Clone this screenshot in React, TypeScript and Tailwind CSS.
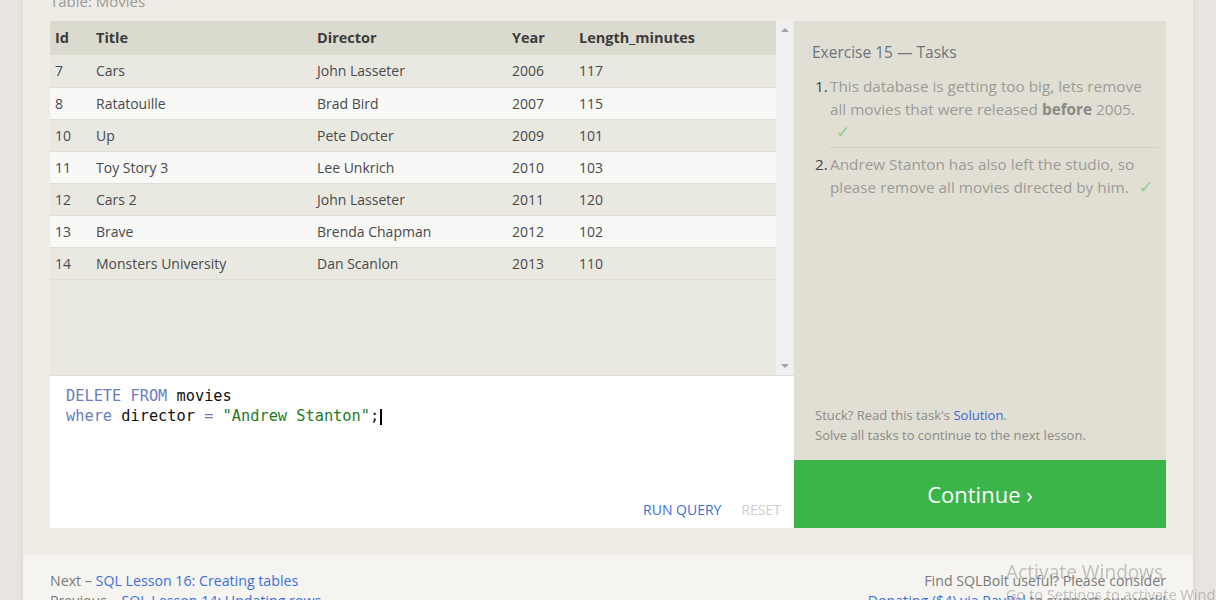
const movies = [
  { id: 7, title: 'Cars', director: 'John Lasseter', year: 2006, length: 117 },
  { id: 8, title: 'Ratatouille', director: 'Brad Bird', year: 2007, length: 115 },
  { id: 10, title: 'Up', director: 'Pete Docter', year: 2009, length: 101 },
  { id: 11, title: 'Toy Story 3', director: 'Lee Unkrich', year: 2010, length: 103 },
  { id: 12, title: 'Cars 2', director: 'John Lasseter', year: 2011, length: 120 },
  { id: 13, title: 'Brave', director: 'Brenda Chapman', year: 2012, length: 102 },
  { id: 14, title: 'Monsters University', director: 'Dan Scanlon', year: 2013, length: 110 },
];

const sans = "font-['Open_Sans','Noto_Sans',sans-serif]";

function Check() {
  return (
    <span className="ml-[6px] inline-block w-[18px] font-['DejaVu_Sans',sans-serif] text-[17px] leading-[23px] text-[#8ad08a]">
      ✓
    </span>
  );
}

export default function App() {
  return (
    <div className={`min-h-screen overflow-hidden bg-[#e8e5e1] ${sans}`}>
      <div className="mx-auto w-[1170px] bg-[#efece5] shadow-[0_0_6px_rgba(0,0,0,0.08)]">
        <div className="px-[27px] pb-[27px]">
          <p className="-mt-[9px] text-[15px] leading-[20px] text-[#9a9a9a]">Table: Movies</p>

          <div className="mt-[10px] flex">
            {/* left: results + editor */}
            <div className="flex w-[744px] flex-col">
              <div className="flex h-[354px] bg-[#e9e8e1]">
                <div className="flex-1">
                  <table className="w-full border-collapse text-left text-[14px] text-[#4a4a4a]">
                    <thead>
                      <tr className="h-[34px] bg-[#dbdacf] text-[14.5px] text-[#3c3c3c]">
                        <th className="w-[40px] pl-[5px] font-bold">Id</th>
                        <th className="w-[221px] pl-[6px] font-bold">Title</th>
                        <th className="w-[195px] pl-[6px] font-bold">Director</th>
                        <th className="w-[67px] pl-[6px] font-bold">Year</th>
                        <th className="pl-[6px] font-bold">Length_minutes</th>
                      </tr>
                    </thead>
                    <tbody>
                      {movies.map((m, i) => (
                        <tr
                          key={m.id}
                          className={`h-[32px] border-b border-[#dfddd6] ${i % 2 === 1 ? 'bg-[#f8f8f7]' : 'bg-[#e9e8e1]'}`}
                        >
                          <td className="pl-[5px]">{m.id}</td>
                          <td className="pl-[6px]">{m.title}</td>
                          <td className="pl-[6px]">{m.director}</td>
                          <td className="pl-[6px]">{m.year}</td>
                          <td className="pl-[6px]">{m.length}</td>
                        </tr>
                      ))}
                    </tbody>
                  </table>
                </div>
                <div className="flex w-[17px] flex-col items-center justify-between bg-[#f0f0f0] py-[7px]">
                  <div className="h-0 w-0 border-x-[4px] border-b-[4px] border-x-transparent border-b-[#a3a3a3]" />
                  <div className="h-0 w-0 border-x-[4px] border-t-[4px] border-x-transparent border-t-[#a3a3a3]" />
                </div>
                <div className="w-px bg-[#efece5]" />
              </div>

              <div className="flex h-[153px] flex-col border-t border-[#dfddd6] bg-white">
                <pre className="flex-1 pl-[16px] pt-[10px] font-['DejaVu_Sans_Mono',monospace] text-[15.3px] leading-[20px] text-[#111]">
                  <span className="text-[#6b7cc0]">DELETE FROM</span> movies{'\n'}
                  <span className="text-[#6b7cc0]">where</span> director <span className="text-[#6b7cc0]">=</span>{' '}
                  <span className="text-[#1e7b1e]">"Andrew Stanton"</span>;
                  <span className="ml-px inline-block h-[16px] w-[2px] translate-y-[3px] align-top bg-black" />
                </pre>
                <div className="flex justify-end gap-[20px] pb-[8px] pr-[13px] text-[14px] leading-[20px]">
                  <span className="text-[#3d6fdb]">RUN QUERY</span>
                  <span className="text-[#cfcfcf]">RESET</span>
                </div>
              </div>
            </div>

            {/* right: tasks */}
            <div className="flex w-[372px] flex-col">
              <div className="flex flex-1 flex-col bg-[#e1dfd4] pl-[18px] pr-[8px] pt-[19px]">
                <h2 className="text-[15.5px] leading-[24px] text-[#6d727c]">Exercise 15 — Tasks</h2>
                <ol className="mt-[11px] text-[15.3px] leading-[23px] text-[#9b9b97]">
                  <li className="flex">
                    <span className="ml-[3px] w-[14px] shrink-0 text-[#3f4450]">1.</span>
                    <div className="flex-1 border-b border-[#d3d1c6] pb-[3px] pl-px">
                      This database is getting too big, lets remove all movies that were released{' '}
                      <b className="text-[#8a8a86]">before</b> 2005. <Check />
                    </div>
                  </li>
                  <li className="flex pt-[5px]">
                    <span className="ml-[3px] w-[14px] shrink-0 text-[#3f4450]">2.</span>
                    <div className="flex-1 pl-px">
                      Andrew Stanton has also left the studio, so please remove all movies directed by him. <Check />
                    </div>
                  </li>
                </ol>
                <div className="mt-auto pb-[15px] pl-[3px] text-[13px] leading-[20px] text-[#8c8a85]">
                  <p>
                    Stuck? Read this task's <span className="text-[#3d63db]">Solution</span>.
                  </p>
                  <p>Solve all tasks to continue to the next lesson.</p>
                </div>
              </div>
              <div className="flex h-[68px] items-center justify-center bg-[#3bb54a] text-[22px] text-white">
                Continue ›
              </div>
            </div>
          </div>
        </div>

        <div className="flex justify-between bg-[#f5f4f1] px-[27px] pb-[20px] pt-[16px] text-[14.2px] leading-[20px] text-[#7a7a7a]">
          <div>
            <p>
              Next – <span className="text-[#3d6fdb]">SQL Lesson 16: Creating tables</span>
            </p>
            <p>
              Previous – <span className="text-[#3d6fdb]">SQL Lesson 14: Updating rows</span>
            </p>
          </div>
          <div className="text-right">
            <p>Find SQLBolt useful? Please consider</p>
            <p>
              <span className="text-[#3d6fdb]">Donating ($4) via PayPal</span> to support our work!
            </p>
          </div>
        </div>
      </div>

      <div className="pointer-events-none fixed left-[1006px] top-[560px] whitespace-nowrap font-['Noto_Sans',sans-serif] text-[rgba(150,150,150,0.55)]">
        <p className="text-[19px] leading-[25px]">Activate Windows</p>
        <p className="text-[14.5px] leading-[18px]">Go to Settings to activate Windows.</p>
      </div>
    </div>
  );
}
